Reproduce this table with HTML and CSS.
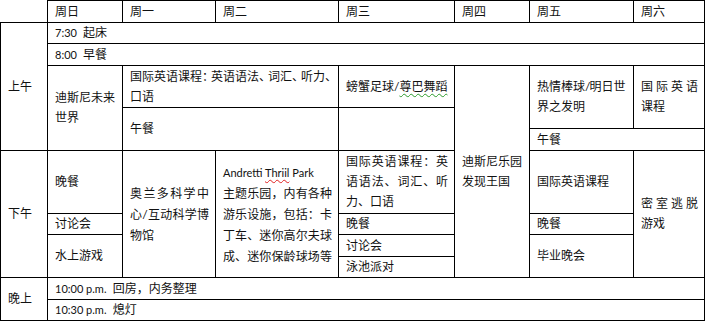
FILE: index.html
```html
<!DOCTYPE html>
<html lang="zh-CN">
<head>
<meta charset="utf-8">
<title>日程表</title>
<link rel="stylesheet" href="styles.css">
</head>
<body>
<table class="sched">
  <colgroup>
    <col class="c0"><col class="c1"><col class="c2"><col class="c3"><col class="c4"><col class="c5"><col class="c6"><col class="c7">
  </colgroup>
  <tbody>
    <tr class="h22">
      <td class="corner"></td><td>周日</td><td>周一</td><td>周二</td><td>周三</td><td>周四</td><td>周五</td><td>周六</td>
    </tr>
    <tr class="h21">
      <td rowspan="5">上午</td>
      <td colspan="7"><span class="lat">7:30</span>&nbsp; 起床</td>
    </tr>
    <tr class="h22">
      <td colspan="7"><span class="lat">8:00</span>&nbsp; 早餐</td>
    </tr>
    <tr class="h42">
      <td rowspan="3">迪斯尼未来<br>世界</td>
      <td colspan="2">国际英语课程<span class="pc">：</span>英语语法<span class="pc">、</span>词汇<span class="pc">、</span>听力<span class="pc">、</span><br>口语</td>
      <td>螃蟹足球/<span class="sq-green">尊巴舞蹈</span></td>
      <td rowspan="7">迪斯尼乐园<br>发现王国</td>
      <td rowspan="2">热情棒球<span class="sl">/</span>明日世<br>界之发明</td>
      <td rowspan="2"><span class="j">国际英语</span>课程</td>
    </tr>
    <tr class="h21">
      <td colspan="2" rowspan="2">午餐</td>
      <td rowspan="2"></td>
    </tr>
    <tr class="h22">
      <td colspan="2">午餐</td>
    </tr>
    <tr class="h63">
      <td rowspan="4">下午</td>
      <td>晚餐</td>
      <td rowspan="4" class="lh21"><span class="j">奥兰多科学中</span><span class="j">心/互动科学博</span>物馆</td>
      <td rowspan="4" class="lh21"><span class="lat">Andretti <span class="sq-red">Thriil</span> Park</span><br><span class="j">主题乐园，内有各种</span><span class="j">游乐设施，包括：卡</span><span class="j">丁车、迷你高尔夫球</span><span class="j">成、迷你保龄球场等</span></td>
      <td><span class="j">国际英语课程：英</span><span class="j">语语法、词汇、听</span>力、口语</td>
      <td>国际英语课程</td>
      <td rowspan="4"><span class="j">密室逃脱</span>游戏</td>
    </tr>
    <tr class="h21">
      <td>讨论会</td>
      <td>晚餐</td>
      <td>晚餐</td>
    </tr>
    <tr class="h22">
      <td rowspan="2">水上游戏</td>
      <td>讨论会</td>
      <td rowspan="2">毕业晚会</td>
    </tr>
    <tr class="h21">
      <td>泳池派对</td>
    </tr>
    <tr class="h22">
      <td rowspan="2">晚上</td>
      <td colspan="7"><span class="lat">10:00 p.m.</span>&nbsp; 回房，内务整理</td>
    </tr>
    <tr class="h21">
      <td colspan="7"><span class="lat">10:30 p.m.</span>&nbsp; 熄灯</td>
    </tr>
  </tbody>
</table>
</body>
</html>
```

FILE: styles.css
```css
html, body {
  margin: 0;
  padding: 0;
  background: #fff;
}

body {
  font-family: Lato, "Noto Sans CJK SC", sans-serif;
  font-size: 12px;
  color: #111;
}

.sched {
  border-collapse: collapse;
  table-layout: fixed;
  width: 704px;
}

.c0 { width: 47px; }
.c1 { width: 75px; }
.c2 { width: 93px; }
.c3 { width: 123px; }
.c4 { width: 116px; }
.c5 { width: 75px; }
.c6 { width: 104px; }
.c7 { width: 71px; }

.h21 { height: 21px; }
.h22 { height: 22px; }
.h42 { height: 42px; }
.h63 { height: 63px; }

.sched td {
  border: 1px solid #000;
  padding: 0 6px 0 7px;
  line-height: 20px;
  vertical-align: middle;
  text-align: left;
  white-space: nowrap;
  overflow: hidden;
}

.sched td.corner {
  border-top: none;
  border-left: none;
}

.sched td.lh21 {
  line-height: 21px;
}

.j {
  display: block;
  white-space: normal;
  text-align: justify;
  text-align-last: justify;
}

.lat {
  font-size: 11px;
}

.pc {
  letter-spacing: -3px;
}

.sl {
  letter-spacing: -1px;
}

.sq-red {
  text-decoration: underline wavy #e02020;
  text-decoration-thickness: 1px;
  text-underline-offset: 2px;
}

.sq-green {
  text-decoration: underline wavy #2a9a2a;
  text-decoration-thickness: 1px;
  text-underline-offset: 2px;
}
```
